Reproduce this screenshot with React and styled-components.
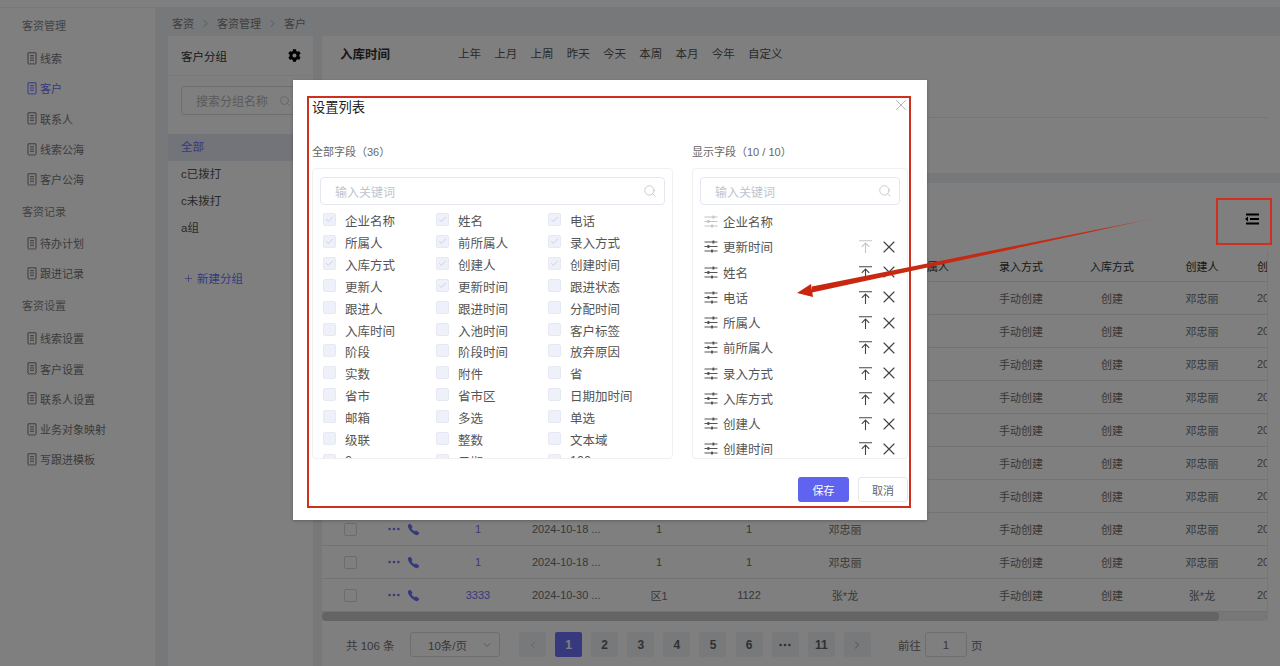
import React from "react";
import styled, { createGlobalStyle } from "styled-components";
import { X, Search, Plus, ChevronRight, ChevronLeft, ChevronDown, Check } from "lucide-react";
import { FaCog } from "react-icons/fa";
import { IoCall } from "react-icons/io5";

const FONT = `"Liberation Sans", "Noto Sans CJK SC", sans-serif`;
const BRAND = "#6f72ff";

const GlobalStyle = createGlobalStyle`
  html, body { margin: 0; padding: 0; height: 100%; overflow: hidden; }
  body { font-family: ${FONT}; background: #edf0f3; }
  * { box-sizing: border-box; }
`;

const menu = [
  { title: "客资管理", items: ["线索", "客户", "联系人", "线索公海", "客户公海"] },
  { title: "客资记录", items: ["待办计划", "跟进记录"] },
  { title: "客资设置", items: ["线索设置", "客户设置", "联系人设置", "业务对象映射", "写跟进模板"] }
];

const groups = ["全部", "c已拨打", "c未拨打", "a组"];
const quickDates = ["上年", "上月", "上周", "昨天", "今天", "本周", "本月", "今年", "自定义"];
const columns = ["", "", "企业名称", "更新时间", "姓名", "电话", "所属人", "前所属人", "录入方式", "入库方式", "创建人", "创建时间"];

const plainRow = { name: "1", time: "2024-10-18 ...", person: "1", phone: "1", owner: "邓忠丽" };
const rows = [...Array(9).fill(plainRow), { name: "3333", time: "2024-10-30 ...", person: "区1", phone: "1122", owner: "张*龙" }];

const allFields = [
  ["企业名称", true], ["姓名", true], ["电话", true],
  ["所属人", true], ["前所属人", true], ["录入方式", true],
  ["入库方式", true], ["创建人", true], ["创建时间", true],
  ["更新人"], ["更新时间", true], ["跟进状态"],
  ["跟进人"], ["跟进时间"], ["分配时间"],
  ["入库时间"], ["入池时间"], ["客户标签"],
  ["阶段"], ["阶段时间"], ["放弃原因"],
  ["实数"], ["附件"], ["省"],
  ["省市"], ["省市区"], ["日期加时间"],
  ["邮箱"], ["多选"], ["单选"],
  ["级联"], ["整数"], ["文本域"],
  ["2"], ["日期"], ["100"]
];

const shownFields = ["企业名称", "更新时间", "姓名", "电话", "所属人", "前所属人", "录入方式", "入库方式", "创建人", "创建时间"];
const pages = ["1", "2", "3", "4", "5", "6", "dots", "11"];

function DocIcon() {
  return (
    <svg width="10" height="13" viewBox="0 0 10 13" fill="none" stroke="currentColor" strokeWidth="1">
      <path d="M1 .8h8v10.6l-1.3 1-1.3-1-1.4 1-1.4-1-1.3 1-1.3-1z" />
      <path d="M3 3.7h4M3 6h4M3 8.3h4" />
    </svg>
  );
}

function SliderIcon() {
  return (
    <svg width="14" height="13" viewBox="0 0 14 13" fill="currentColor">
      <rect x="0.5" y="1.5" width="13" height="1" />
      <rect x="0.5" y="6" width="13" height="1" />
      <rect x="0.5" y="10.5" width="13" height="1" />
      <rect x="8.4" y="0.4" width="2" height="3.2" rx="0.6" />
      <rect x="3.4" y="4.9" width="2" height="3.2" rx="0.6" />
      <rect x="7" y="9.4" width="2" height="3.2" rx="0.6" />
    </svg>
  );
}

function PinIcon() {
  return (
    <svg width="13" height="13" viewBox="0 0 13 13" fill="none" stroke="currentColor" strokeWidth="1.1">
      <path d="M0 .8h13" />
      <path d="M6.5 13V3.2M2.8 6.8l3.7-3.7 3.7 3.7" />
    </svg>
  );
}

function DotsIcon({ color }) {
  return (
    <svg width="12" height="4" viewBox="0 0 12 4" fill={color}>
      <circle cx="1.6" cy="2" r="1.3" />
      <circle cx="6" cy="2" r="1.3" />
      <circle cx="10.4" cy="2" r="1.3" />
    </svg>
  );
}

function ColumnsIcon() {
  return (
    <svg width="14" height="12" viewBox="0 0 14 12" fill="#000">
      <rect x="1" y="0.5" width="13" height="2" />
      <rect x="5" y="5" width="9" height="2" />
      <rect x="1" y="9.5" width="13" height="2" />
      <path d="M0 6l3-2.4v4.8z" />
    </svg>
  );
}

function Annotation() {
  return (
    <ArrowLayer width="1280" height="666" viewBox="0 0 1280 666">
      <defs>
        <linearGradient id="fade" gradientUnits="userSpaceOnUse" x1="1170" y1="215" x2="815" y2="288">
          <stop offset="0" stopColor="#c8260e" stopOpacity="0" />
          <stop offset="0.22" stopColor="#c8260e" stopOpacity="0.95" />
          <stop offset="1" stopColor="#c8260e" />
        </linearGradient>
      </defs>
      <polygon points="1170,215 812,286.5 812,292.5" fill="url(#fade)" />
      <polygon points="797,293 811,284 813,297" fill="#c8260e" />
    </ArrowLayer>
  );
}

export default function App() {
  return (
    <Page>
      <GlobalStyle />
      <Header />
      <Body>
        <Sidebar>
          {menu.map((section) => (
            <MenuSection key={section.title}>
              <MenuTitle>{section.title}</MenuTitle>
              {section.items.map((item) => (
                <MenuItem key={item} $active={item === "客户"}>
                  <DocIcon />
                  <span>{item}</span>
                </MenuItem>
              ))}
            </MenuSection>
          ))}
        </Sidebar>

        <Main>
          <Breadcrumb>
            <span>客资</span>
            <ChevronRight size={13} strokeWidth={1} />
            <span>客资管理</span>
            <ChevronRight size={13} strokeWidth={1} />
            <span>客户</span>
          </Breadcrumb>

          <Content>
            <GroupPanel>
              <GroupHeader>
                <span>客户分组</span>
                <FaCog size={13} color="#000" />
              </GroupHeader>
              <GroupSearch>
                <span>搜索分组名称</span>
                <Search size={12} strokeWidth={1.2} />
              </GroupSearch>
              {groups.map((group, i) => (
                <GroupItem key={group} $active={i === 0}>{group}</GroupItem>
              ))}
              <NewGroup>
                <Plus size={11} strokeWidth={1.5} />
                <span>新建分组</span>
              </NewGroup>
            </GroupPanel>

            <Right>
              <FilterCard>
                <FilterRow>
                  <FilterLabel>入库时间</FilterLabel>
                  {quickDates.map((d) => <QuickDate key={d}>{d}</QuickDate>)}
                </FilterRow>
                <FilterDivider />
              </FilterCard>

              <TableCard>
                <ColumnsButton><ColumnsIcon /></ColumnsButton>
                <TableClip>
                  <TableRow $head>
                    {columns.map((c, i) => <Cell key={i} $col={i}>{c}</Cell>)}
                  </TableRow>
                  {rows.map((row, i) => (
                    <TableRow key={i}>
                      <Cell $col={0}><RowCheck /></Cell>
                      <Cell $col={1}>
                        <DotsIcon color={BRAND} />
                        <IoCall size={13} color={BRAND} />
                      </Cell>
                      <Cell $col={2}><NameLink>{row.name}</NameLink></Cell>
                      <Cell $col={3}>{row.time}</Cell>
                      <Cell $col={4}>{row.person}</Cell>
                      <Cell $col={5}>{row.phone}</Cell>
                      <Cell $col={6}>{row.owner}</Cell>
                      <Cell $col={7} />
                      <Cell $col={8}>手动创建</Cell>
                      <Cell $col={9}>创建</Cell>
                      <Cell $col={10}>{row.owner}</Cell>
                      <Cell $col={11}>2024-10-18</Cell>
                    </TableRow>
                  ))}
                  <ScrollTrack><ScrollThumb /></ScrollTrack>
                </TableClip>

                <Pager>
                  <Total>共 106 条</Total>
                  <SizeSelect>
                    <span>10条/页</span>
                    <ChevronDown size={12} strokeWidth={1} />
                  </SizeSelect>
                  <PageButton $muted><ChevronLeft size={12} strokeWidth={1.2} /></PageButton>
                  {pages.map((p) => (
                    <PageButton key={p} $active={p === "1"}>
                      {p === "dots" ? <DotsIcon color="#606266" /> : p}
                    </PageButton>
                  ))}
                  <PageButton><ChevronRight size={12} strokeWidth={1.2} /></PageButton>
                  <GoTo>前往</GoTo>
                  <GoInput>1</GoInput>
                  <GoTail>页</GoTail>
                </Pager>
              </TableCard>
            </Right>
          </Content>
        </Main>
      </Body>

      <Overlay />

      <Modal>
        <ModalTitle>设置列表</ModalTitle>
        <CloseButton><X size={18} strokeWidth={1} /></CloseButton>
        <Panels>
          <div>
            <PanelLabel>全部字段（36）</PanelLabel>
            <FieldPanel $width={361}>
              <KeywordInput>
                <span>输入关键词</span>
                <Search size={14} strokeWidth={1} />
              </KeywordInput>
              <FieldGrid>
                {allFields.map(([label, checked]) => (
                  <Field key={label}>
                    <FieldBox>{checked && <Check size={9} strokeWidth={1.2} />}</FieldBox>
                    <span>{label}</span>
                  </Field>
                ))}
              </FieldGrid>
            </FieldPanel>
          </div>
          <div>
            <PanelLabel>显示字段（10 / 10）</PanelLabel>
            <FieldPanel $width={216}>
              <KeywordInput>
                <span>输入关键词</span>
                <Search size={14} strokeWidth={1} />
              </KeywordInput>
              <ShownList>
                {shownFields.map((field, i) => (
                  <ShownItem key={field}>
                    <ShownHandle $locked={i === 0}><SliderIcon /></ShownHandle>
                    <ShownName>{field}</ShownName>
                    {i > 0 && (
                      <>
                        <PinButton $faded={i === 1}><PinIcon /></PinButton>
                        <RemoveButton><X size={20} strokeWidth={1.4} /></RemoveButton>
                      </>
                    )}
                  </ShownItem>
                ))}
              </ShownList>
            </FieldPanel>
          </div>
        </Panels>
        <ModalFooter>
          <SaveButton>保存</SaveButton>
          <CancelButton>取消</CancelButton>
        </ModalFooter>
      </Modal>

      <RedFrame $left={307} $top={96} $width={604} $height={412} />
      <RedFrame $left={1216} $top={198} $width={56} $height={47} />
      <Annotation />
    </Page>
  );
}

const Page = styled.div`
  position: relative;
  width: 1280px;
  height: 666px;
  overflow: hidden;
  font-family: ${FONT};
  background: #edf0f3;
`;

const Header = styled.div`
  height: 8px;
  background: #fff;
  border-bottom: 1px solid #f0f0f0;
`;

const Body = styled.div`
  display: flex;
  height: 658px;
`;

const Sidebar = styled.div`
  width: 155px;
  flex-shrink: 0;
  background: #fff;
  padding-top: 2px;
`;

const MenuTitle = styled.div`
  height: 32px;
  margin-bottom: 1px;
  padding-left: 22px;
  line-height: 32px;
  font-size: 11px;
  color: #888;
`;

const MenuSection = styled.div`
  &:nth-child(2) {
    margin-top: 2px;
    padding-bottom: 1.5px;
  }
  &:nth-child(2) ${MenuTitle} {
    margin-bottom: -0.5px;
  }
`;

const MenuItem = styled.div`
  display: flex;
  align-items: center;
  gap: 3px;
  height: 30.3px;
  padding-left: 27px;
  font-size: 11px;
  color: ${(p) => (p.$active ? BRAND : "#777")};
`;

const Main = styled.div`
  flex: 1;
  min-width: 0;
`;

const Breadcrumb = styled.div`
  display: flex;
  align-items: center;
  gap: 5px;
  height: 28px;
  padding: 2px 0 0 17px;
  font-size: 11px;
  color: #808080;
`;

const Content = styled.div`
  display: flex;
  height: 630px;
  padding-left: 13px;
`;

const GroupPanel = styled.div`
  width: 145px;
  flex-shrink: 0;
  background: #fff;
`;

const GroupHeader = styled.div`
  display: flex;
  align-items: center;
  justify-content: space-between;
  height: 40px;
  padding: 0 12px 0 13px;
  border-bottom: 1px solid #f2f2f2;
  font-size: 11.5px;
  color: #333;
`;

const GroupSearch = styled.div`
  display: flex;
  align-items: center;
  justify-content: space-between;
  height: 29px;
  margin: 10px 13px 19px;
  padding: 0 8px 0 14px;
  border: 1px solid #ddd;
  border-radius: 3px;
  font-size: 12px;
  color: #b5b5b5;
`;

const GroupItem = styled.div`
  height: 27px;
  padding-left: 13px;
  line-height: 27px;
  font-size: 11.5px;
  color: ${(p) => (p.$active ? BRAND : "#555")};
  background: ${(p) => (p.$active ? "#e6e9f2" : "transparent")};
`;

const NewGroup = styled.div`
  display: flex;
  align-items: center;
  gap: 3px;
  margin: 28px 0 0 15px;
  font-size: 11.5px;
  color: ${BRAND};
`;

const Right = styled.div`
  flex: 1;
  min-width: 0;
  margin-left: 9px;
`;

const FilterCard = styled.div`
  height: 137px;
  background: #fff;
`;

const FilterRow = styled.div`
  display: flex;
  align-items: center;
  height: 36px;
  padding-left: 18px;
`;

const FilterLabel = styled.div`
  width: 118px;
  margin-top: -2px;
  font-size: 12.5px;
  font-weight: 700;
  color: #333;
`;

const QuickDate = styled.div`
  margin-right: 13.25px;
  margin-top: -2px;
  font-size: 11.5px;
  color: #555;
`;

const FilterDivider = styled.div`
  width: 946px;
  height: 1px;
  margin-top: 45px;
  background: #ececec;
`;

const TableCard = styled.div`
  position: relative;
  height: 483px;
  margin-top: 10px;
  padding-top: 67px;
  background: #fff;
`;

const ColumnsButton = styled.div`
  position: absolute;
  top: 30px;
  right: 21px;
  display: flex;
`;

const TableClip = styled.div`
  width: 946px;
  overflow: hidden;
  border-right: 1px solid #eee;
`;

const TableRow = styled.div`
  display: grid;
  grid-template-columns: 56px 52px 96px 104px 58px 122px 70px 94px 94px 88px 92px 120px;
  width: 1046px;
  height: ${(p) => (p.$head ? "32px" : "33px")};
  border-bottom: 1px solid #e6e6e6;
  font-size: 11px;
  color: ${(p) => (p.$head ? "#333" : "#707070")};
`;

const Cell = styled.div`
  display: flex;
  align-items: center;
  justify-content: ${(p) => (p.$col === 3 || p.$col === 11 ? "flex-start" : "center")};
  padding-left: ${(p) => (p.$col === 3 ? "6px" : p.$col === 11 ? "9px" : "0")};
  gap: ${(p) => (p.$col === 1 ? "7px" : "0")};
  white-space: nowrap;
`;

const RowCheck = styled.div`
  width: 13px;
  height: 13px;
  border: 1px solid #d8d8d8;
  border-radius: 2px;
`;

const NameLink = styled.span`
  color: ${BRAND};
`;

const ScrollTrack = styled.div`
  height: 9px;
  background: #eee;
  border-radius: 0 0 4px 4px;
`;

const ScrollThumb = styled.div`
  width: 897px;
  height: 9px;
  background: #c8c8c8;
  border-radius: 4px;
`;

const Pager = styled.div`
  display: flex;
  align-items: center;
  height: 25px;
  margin-top: 11px;
  padding-left: 24px;
  font-size: 11.5px;
  color: #707070;
`;

const Total = styled.div`
  width: 64px;
`;

const SizeSelect = styled.div`
  display: flex;
  align-items: center;
  justify-content: space-between;
  width: 90px;
  height: 25px;
  margin-right: 19px;
  padding: 0 6px 0 17px;
  border: 1px solid #ddd;
  border-radius: 3px;
  color: #707070;
`;

const PageButton = styled.div`
  display: flex;
  align-items: center;
  justify-content: center;
  width: 27px;
  height: 25px;
  margin-right: 9.1px;
  border-radius: 2px;
  font-weight: 700;
  font-size: 12px;
  background: ${(p) => (p.$active ? BRAND : "#f0f2f5")};
  color: ${(p) => (p.$active ? "#fff" : p.$muted ? "#aaa" : "#606266")};
`;

const GoTo = styled.div`
  margin-left: 18px;
`;

const GoInput = styled.div`
  display: flex;
  align-items: center;
  justify-content: center;
  width: 42px;
  height: 25px;
  margin-left: 4px;
  border: 1px solid #ddd;
  border-radius: 3px;
`;

const GoTail = styled.div`
  margin-left: 4px;
`;

const Overlay = styled.div`
  position: absolute;
  inset: 0;
  background: rgba(0, 0, 0, 0.5);
`;

const Modal = styled.div`
  position: absolute;
  left: 293px;
  top: 80px;
  width: 634px;
  height: 440px;
  background: #fff;
  box-shadow: 0 1px 3px rgba(0, 0, 0, 0.25);
`;

const ModalTitle = styled.div`
  position: absolute;
  left: 19px;
  top: 19px;
  font-size: 13.25px;
  line-height: 18px;
  color: #222;
`;

const CloseButton = styled.div`
  position: absolute;
  left: 599px;
  top: 16px;
  display: flex;
  color: #999;
`;

const Panels = styled.div`
  position: absolute;
  left: 19px;
  top: 64px;
  display: flex;
  gap: 19px;
`;

const PanelLabel = styled.div`
  height: 24px;
  padding-top: 1px;
  line-height: 15px;
  font-size: 11px;
  color: #666;
`;

const FieldPanel = styled.div`
  width: ${(p) => p.$width}px;
  height: 291px;
  padding: 8px 7px 0;
  overflow: hidden;
  border: 1px solid #f0f0f0;
  border-radius: 4px;
`;

const KeywordInput = styled.div`
  display: flex;
  align-items: center;
  justify-content: space-between;
  height: 28px;
  padding: 0 7px 0 14px;
  border: 1px solid #e4e6ef;
  border-radius: 4px;
  font-size: 12px;
  color: #c0c4cc;
  svg { color: #aaa; }
`;

const FieldGrid = styled.div`
  display: grid;
  grid-template-columns: 113px 112px 112px;
  grid-auto-rows: 21.85px;
  margin: 5px 0 0 3px;
`;

const Field = styled.div`
  display: flex;
  align-items: center;
  gap: 9px;
  font-size: 12.5px;
  color: #555;
`;

const FieldBox = styled.div`
  display: flex;
  align-items: center;
  justify-content: center;
  width: 13px;
  height: 13px;
  margin-top: -2px;
  border: 1px solid #e6e9f3;
  border-radius: 2px;
  background: #eef1f9;
  color: #a8acb5;
`;

const ShownList = styled.div`
  margin: 4px 1px 0 4px;
`;

const ShownItem = styled.div`
  display: flex;
  align-items: center;
  height: 25.25px;
  font-size: 12.5px;
  color: #555;
`;

const ShownHandle = styled.div`
  display: flex;
  color: ${(p) => (p.$locked ? "#c4c4c4" : "#555")};
`;

const ShownName = styled.div`
  flex: 1;
  margin-left: 5px;
`;

const PinButton = styled.div`
  display: flex;
  margin-right: 7.5px;
  color: ${(p) => (p.$faded ? "#c4c4c4" : "#444")};
`;

const RemoveButton = styled.div`
  display: flex;
  color: #444;
`;

const ModalFooter = styled.div`
  position: absolute;
  right: 19px;
  top: 397px;
  display: flex;
  gap: 9px;
`;

const SaveButton = styled.div`
  display: flex;
  align-items: center;
  justify-content: center;
  width: 51px;
  height: 25px;
  border-radius: 3px;
  background: #5f63f0;
  color: #fff;
  font-size: 11px;
`;

const CancelButton = styled(SaveButton)`
  width: 50px;
  background: #fff;
  border: 1px solid #e6e6e6;
  color: #666;
`;

const RedFrame = styled.div`
  position: absolute;
  left: ${(p) => p.$left}px;
  top: ${(p) => p.$top}px;
  width: ${(p) => p.$width}px;
  height: ${(p) => p.$height}px;
  border: 2px solid #cf2f1d;
`;

const ArrowLayer = styled.svg`
  position: absolute;
  left: 0;
  top: 0;
`;
